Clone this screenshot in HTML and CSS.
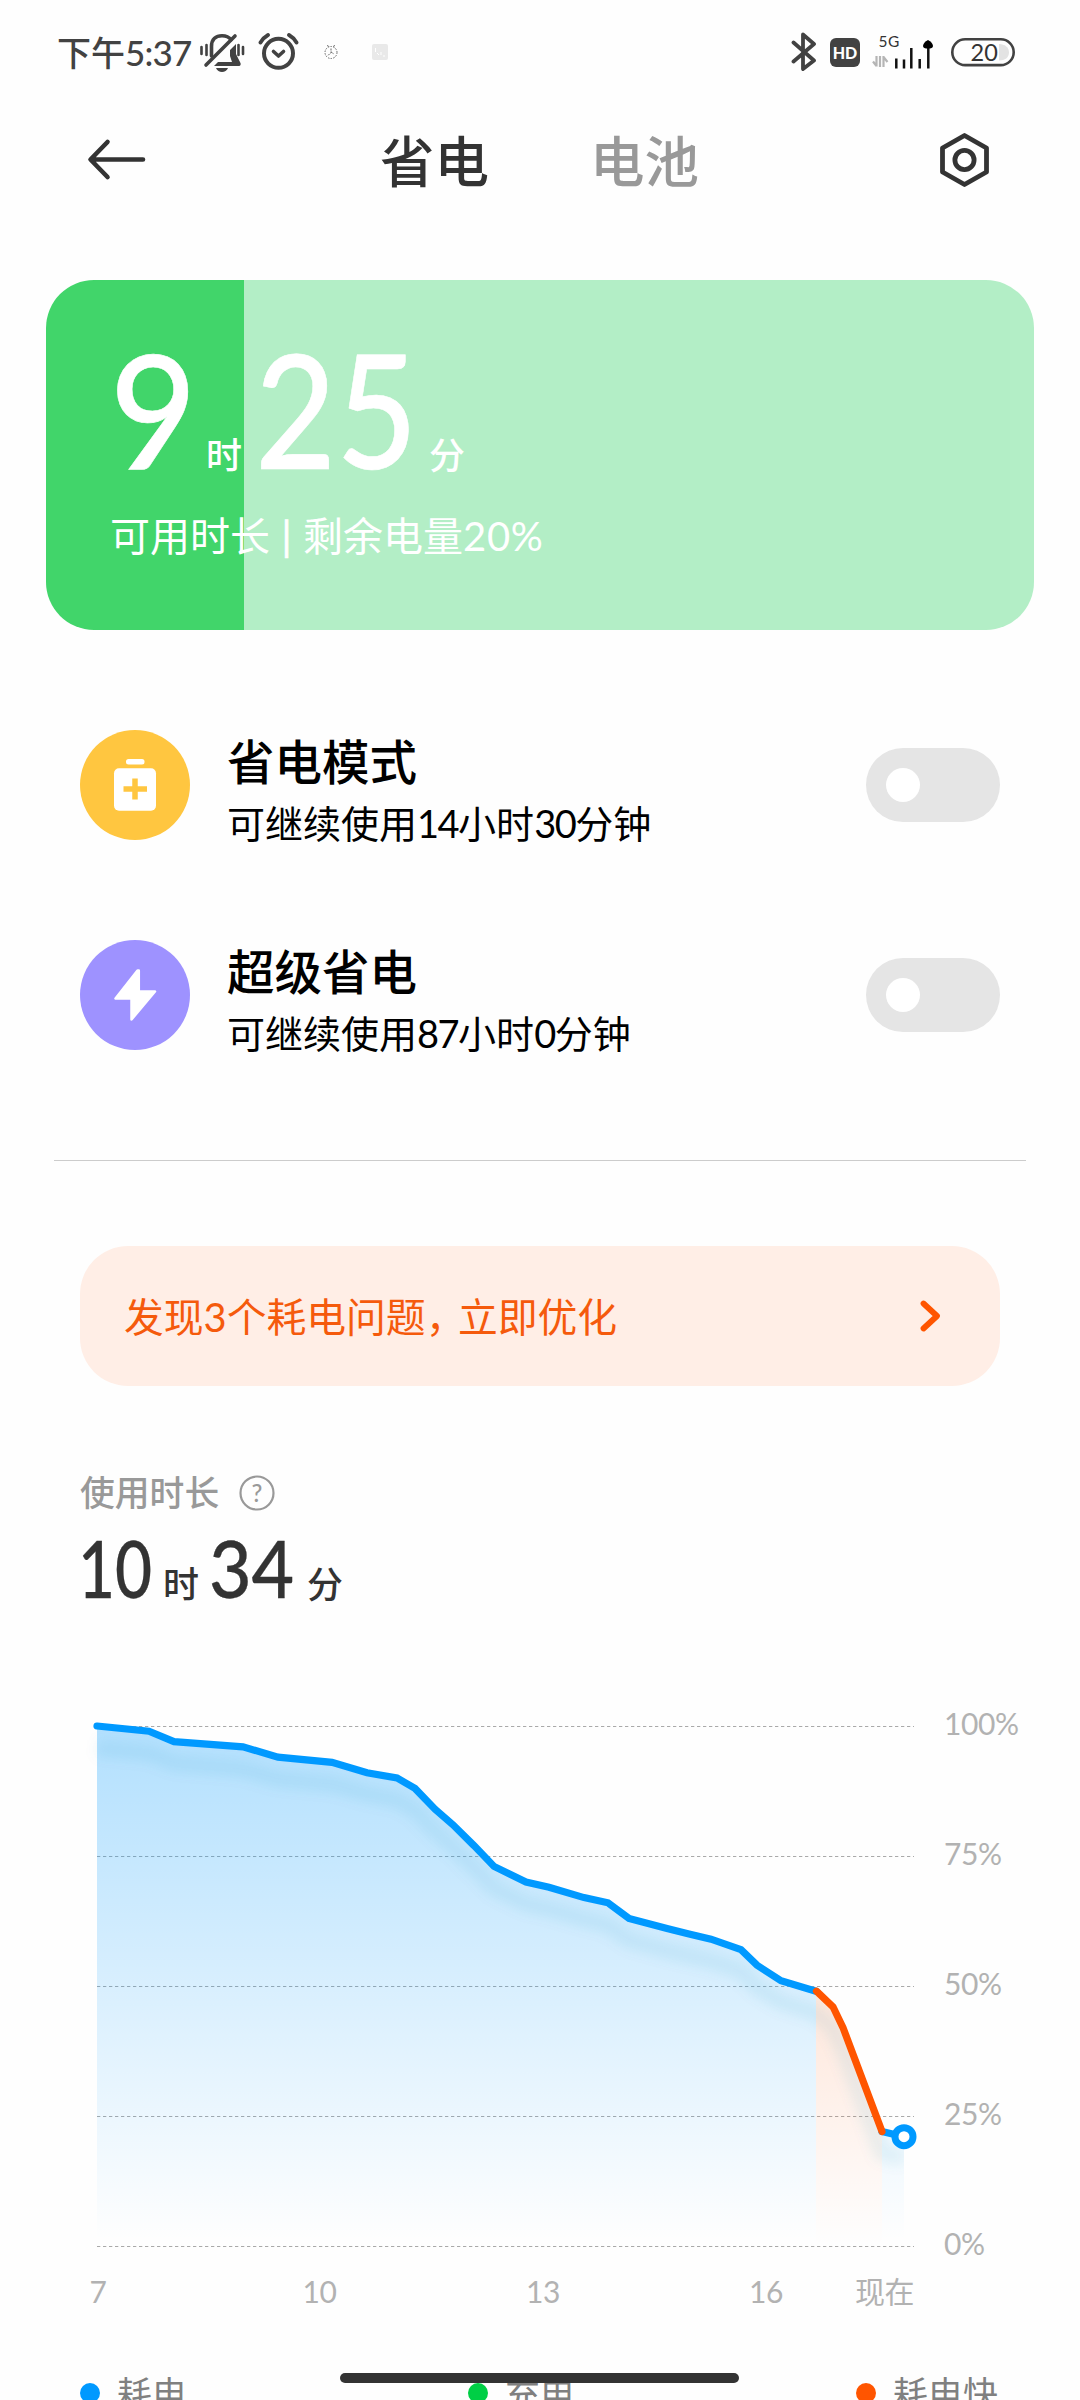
FILE: index.html
```html
<!DOCTYPE html>
<html lang="zh-CN">
<head>
<meta charset="utf-8">
<title>省电</title>
<link rel="stylesheet" href="styles.css">
</head>
<body>
<div class="screen">
  <div class="status">
    <span class="clock">下午<span class="clock-digits">5:37</span></span>
    <svg class="st-bell" width="46" height="40" viewBox="200 32 46 40" fill="none" stroke="#424242" stroke-width="3.6" stroke-linecap="round">
      <path d="M211.500 56V46.500C211.500 39 216 35.800 222 35.800c4 0 7 1.200 9 4"/>
      <path d="M206 65L235 36"/>
      <path d="M236 44v10l4.500 9c.5 1.300 0 3-1.500 3H214l4-4h14l-2-6v-6z" fill="#424242" stroke="none"/>
      <path d="M216 68h12c-1 2.600-3.500 4-6 4s-5-1.400-6-4z" fill="#424242" stroke="none"/>
      <path d="M201.500 47v7M206.500 45v10M238.500 45v10M243 47v7" stroke-width="2.600"/>
    </svg>
    <svg class="st-alarm" width="42" height="40" viewBox="258 32 42 40" fill="none" stroke="#424242" stroke-linecap="round">
      <circle cx="278.500" cy="53.300" r="14.500" stroke-width="4"/>
      <path d="M273.500 51.500l5 4.500 5-4.500" stroke-width="3.600" stroke-linejoin="round"/>
      <path d="M260.500 42.500q3-5 7.500-7.500M296.500 42.500q-3-5-7.500-7.500" stroke-width="3.800"/>
    </svg>
    <svg class="st-app" width="16" height="16" viewBox="0 0 16 16" fill="none" stroke="#666">
      <circle cx="8" cy="8.500" r="6" stroke-dasharray="1.500 1.200"/>
      <path d="M8 4.500v4l-3 3M8 8l3 2M4 1.500l2 1M12 1.500l-2 1" stroke-dasharray="2 1"/>
    </svg>
    <svg class="st-chip" width="16" height="16" viewBox="0 0 16 16">
      <rect width="16" height="16" rx="2" fill="#e9e9e9"/>
      <path d="M3.500 4v4M5 9l2 2M9 8v3M11 12h2" stroke="#fff" fill="none"/>
    </svg>
    <svg class="st-bt" width="26" height="40" viewBox="791 32 26 40" fill="none" stroke="#424242" stroke-width="3.800" stroke-linecap="round" stroke-linejoin="round">
      <path d="M793.500 42.500L814 60.500L803 69V34.500L814 44L793.500 61.500"/>
    </svg>
    <span class="hd">HD</span>
    <svg class="st-signal" width="62" height="40" viewBox="872 32 62 40">
      <text class="net" x="878.500" y="47">5G</text>
      <path d="M876.500 56v10.500M880 56v11M873 61.500l3.500 4.500M883.500 56v11M883.500 57l4 5" stroke="#b5b5b5" stroke-width="2.200" fill="none"/>
      <path d="M896.300 58.500v10M904 59.500v9M911.300 48v20.500M919.700 59v9.500M928.300 44v24.500" stroke="#111" stroke-width="2.500"/>
      <path d="M928 40c3 1.500 5 4 5 6s-2 2.500-5 2.500-5-.5-5-2.500 2-4.500 5-6z" fill="#000"/>
    </svg>
    <svg class="st-batt" width="66" height="30" viewBox="950 37 66 30">
      <path d="M999 44c6 0 10 3.500 10 8.500s-4 8-10 8z" fill="#e3e3e3"/>
      <rect x="952.300" y="39.300" width="61.400" height="25.800" rx="12.900" fill="none" stroke="#424242" stroke-width="2.600"/>
      <text class="batt-num" x="970.500" y="60.500">20</text>
    </svg>
  </div>

  <div class="header">
    <svg class="back" width="60" height="44" viewBox="86 139 60 44" fill="none" stroke="#333" stroke-width="4.600" stroke-linecap="round" stroke-linejoin="round">
      <path d="M107.500 143L90.500 160.500L107.500 178M91 160.500H143"/>
    </svg>
    <span class="tab tab-on">省电</span>
    <span class="tab">电池</span>
    <svg class="gear" width="52" height="56" viewBox="938 132 52 56" fill="none" stroke="#333" stroke-width="4.800" stroke-linejoin="round">
      <path d="M964.500 135.500L986.500 148V172L964.500 184.500L942.500 172V148Z"/>
      <circle cx="964.500" cy="160" r="9.600"/>
    </svg>
  </div>

  <div class="battery-card">
    <div class="big-time">
      <span class="num n9">9</span><span class="unit">时</span><span class="num n25">25</span><span class="unit">分</span>
    </div>
    <div class="remain">可用时长<span class="bar">|</span>剩余电量<span class="pct">20%</span></div>
  </div>

  <div class="modes">
    <div class="mode">
      <svg width="110" height="110" viewBox="0 0 110 110">
        <circle cx="55" cy="55" r="55" fill="#ffc640"/>
        <rect x="46" y="29" width="18.500" height="5.500" rx="2.500" fill="#fff"/>
        <rect x="34" y="38.300" width="42" height="42.500" rx="5" fill="#fff"/>
        <path d="M55 48.500v21M43.500 59h23.500" stroke="#ffc640" stroke-width="5.500"/>
      </svg>
      <div class="mode-text"><div class="mode-title">省电模式</div><div class="mode-sub">可继续使用<span class="d">14</span>小时<span class="d">30</span>分钟</div></div>
      <div class="toggle"><div class="knob"></div></div>
    </div>
    <div class="mode">
      <svg width="110" height="110" viewBox="0 0 110 110">
        <circle cx="55" cy="55" r="55" fill="#9e92ff"/>
        <path d="M57.500 30.500L35.500 58.500H51.500V79.500L75 51.500H58.800V30.500Z" fill="#fff" stroke="#fff" stroke-width="2.500" stroke-linejoin="round"/>
      </svg>
      <div class="mode-text"><div class="mode-title">超级省电</div><div class="mode-sub">可继续使用<span class="d">87</span>小时<span class="d">0</span>分钟</div></div>
      <div class="toggle"><div class="knob"></div></div>
    </div>
  </div>

  <div class="divider"></div>

  <div class="notice">
    <span>发现3个耗电问题<span class="comma">，</span>立即优化</span>
    <svg width="24" height="36" viewBox="918 1298 24 36" fill="none" stroke="#ff5500" stroke-width="5.800" stroke-linecap="round" stroke-linejoin="round"><path d="M923.500 1302.500L937 1315L923.500 1327.500"/></svg>
  </div>

  <div class="usage-label">使用时长
    <svg width="36" height="36" viewBox="0 0 36 36"><circle cx="18" cy="18" r="16.500" fill="none" stroke="#999" stroke-width="2.200"/><text class="q" x="18" y="26.500" text-anchor="middle">?</text></svg>
  </div>
  <div class="usage-time"><span class="num u10">10</span><span class="unit">时</span><span class="num u34">34</span><span class="unit">分</span></div>

  <svg class="chart" width="960" height="620" viewBox="80 1700 960 620">
    <defs>
      <linearGradient id="blue" gradientUnits="userSpaceOnUse" x1="0" y1="1726" x2="0" y2="2240"><stop offset="0" stop-color="#0099ff" stop-opacity=".3"/><stop offset="1" stop-color="#0099ff" stop-opacity="0"/></linearGradient>
      <linearGradient id="orange" gradientUnits="userSpaceOnUse" x1="0" y1="1991" x2="0" y2="2246"><stop offset="0" stop-color="#ff5500" stop-opacity=".14"/><stop offset="1" stop-color="#ff5500" stop-opacity="0"/></linearGradient>
      <filter id="soft" filterUnits="userSpaceOnUse" x="60" y="1680" width="900" height="540"><feGaussianBlur stdDeviation="6"/></filter>
      <clipPath id="under"><path d="M80 1726H97L149 1731.200 174 1741.600 243 1746.800 278 1757.200 332 1762.400 367 1772.800 397 1778 415 1788.400 435 1809.200 453 1824.800 474 1845.600 494 1866.400 526 1882 549 1887.200 584 1897.600 608 1902.800 629 1918.400 668 1928.800 689 1934 711 1939.200 741 1949.600 757 1965.200 781 1980.800 816 1991.200 833 2006.800 843 2027.600 882 2131.600 904 2136.800V2246H80Z"/></clipPath>
    </defs>
    <path class="grid" d="M97 1726.500H914M97 1856.500H914M97 1986.500H914M97 2116.500H914M97 2246.500H914"/>
    <path fill="url(#blue)" d="M97 1726L149 1731.200 174 1741.600 243 1746.800 278 1757.200 332 1762.400 367 1772.800 397 1778 415 1788.400 435 1809.200 453 1824.800 474 1845.600 494 1866.400 526 1882 549 1887.200 584 1897.600 608 1902.800 629 1918.400 668 1928.800 689 1934 711 1939.200 741 1949.600 757 1965.200 781 1980.800 816 1991.200V2246H97Z"/>
    <path fill="url(#orange)" d="M816 1991.200L833 2006.800 843 2027.600 882 2131.600V2246H816Z"/>
    <path fill="url(#blue)" d="M882 2131.600L904 2136.800V2246H882Z"/>
    <g clip-path="url(#under)">
      <path class="glow" filter="url(#soft)" d="M97 1748L149 1753 174 1763 243 1769 278 1779 332 1784 367 1794 397 1800 415 1810 435 1831 453 1847 474 1867 494 1888 526 1904 549 1909 584 1919 608 1925 629 1940 668 1951 711 1961 741 1971 757 1987 781 2002 816 2013 833 2028 843 2049 882 2153 904 2158"/>
    </g>
    <path class="line" stroke="#0099ff" d="M882 2131.600L904 2136.800"/>
    <path class="line" stroke="#0099ff" d="M97 1726L149 1731.200 174 1741.600 243 1746.800 278 1757.200 332 1762.400 367 1772.800 397 1778 415 1788.400 435 1809.200 453 1824.800 474 1845.600 494 1866.400 526 1882 549 1887.200 584 1897.600 608 1902.800 629 1918.400 668 1928.800 689 1934 711 1939.200 741 1949.600 757 1965.200 781 1980.800 816 1991.200"/>
    <path class="line" stroke="#ff5500" d="M816.500 1991.200L833 2006.800 843 2027.600 882 2131.600"/>
    <circle cx="904" cy="2136.700" r="9" fill="#fff" stroke="#0099ff" stroke-width="7"/>
    <g class="axis">
      <text x="944" y="1735">100%</text><text x="944" y="1865">75%</text><text x="944" y="1995">50%</text><text x="944" y="2125">25%</text><text x="944" y="2255">0%</text>
      <g text-anchor="middle"><text x="98" y="2303">7</text><text x="319.500" y="2303">10</text><text x="543" y="2303">13</text><text x="766" y="2303">16</text><text x="884.500" y="2303">现在</text></g>
    </g>
  </svg>

  <div class="legend">
    <span><i class="dot blue"></i>耗电</span>
    <span><i class="dot green"></i>充电</span>
    <span><i class="dot orange"></i>耗电快</span>
  </div>
  <div class="home-bar"></div>
</div>
</body>
</html>
```
FILE: styles.css
```css
* { box-sizing: border-box; }
body { margin: 0; background: #fefefe; }
.screen {
  position: relative; width: 1080px; height: 2400px; overflow: hidden;
  background: #fefefe; color: #333;
  font-family: Lato, "Noto Sans CJK SC", sans-serif;
  display: flex; flex-direction: column;
}
.screen > * { flex: none; }
svg { display: block; flex: none; }

.status { height: 104px; padding-left: 57px; display: flex; align-items: center; white-space: nowrap; }
.clock { width: 143px; font-size: 34px; line-height: 104px; color: #424242; font-weight: 500; }
.clock-digits { font-size: 35px; letter-spacing: -0.8px; }
.st-alarm { margin-left: 12px; }
.st-app { margin-left: 23px; }
.st-chip { margin-left: 33px; }
.st-bt { margin-left: 403px; }
.hd {
  margin-left: 13px; width: 30px; height: 29px; border-radius: 6px; background: #424242;
  color: #fff; font-size: 16px; font-weight: 900; line-height: 29px; text-align: center;
}
.st-signal { margin-left: 12px; }
.st-batt { margin-left: 16px; }
.net { font-size: 15.5px; fill: #333; letter-spacing: 0.5px; }
.batt-num { font-size: 23.5px; fill: #333; }

.header { height: 112px; padding-left: 86px; display: flex; align-items: center; }
.tab { width: 110px; margin-left: 100px; padding-top: 2px; font-size: 54.5px; line-height: 112px; font-weight: 500; color: #999; white-space: nowrap; }
.tab-on { margin-left: 234px; color: #333; }
.gear { margin-left: 238px; }

.battery-card {
  margin: 64px 46px 0; height: 350px; padding: 48px 0 0 64px; border-radius: 48px; color: #fff;
  background: linear-gradient(90deg, #41d56a 20%, #b3eec6 20%);
}
.big-time { height: 160px; display: flex; align-items: baseline; font-weight: 500; }
.num { display: block; transform-origin: left; white-space: nowrap; }
.big-time .num { font-size: 159px; line-height: 160px; -webkit-text-stroke: 0.6px #fff; }
.unit { font-size: 36px; line-height: 50px; font-weight: 500; }
.big-time .n9 { width: 96px; transform: scaleX(.94); }
.big-time .n25 { width: 174px; margin-left: 13px; transform: scaleX(.88); }
.remain { margin-top: 18px; font-size: 40px; line-height: 60px; white-space: nowrap; display: flex; }
.bar { width: 33px; text-align: center; -webkit-text-stroke: 0.6px #fff; }
.pct { letter-spacing: 0.7px; }

.modes { margin-top: 100px; padding: 0 80px; display: grid; gap: 100px; color: #000; }
.mode { height: 110px; display: flex; align-items: center; }
.mode-text { flex: 1; margin-left: 37px; height: 110px; padding-top: 4px; white-space: nowrap; }
.mode-title { font-size: 47.5px; line-height: 56px; font-weight: 500; }
.mode-sub { margin-top: 8px; font-size: 38px; line-height: 50px; }
.d { letter-spacing: -1.5px; }
.toggle { width: 134px; height: 74px; border-radius: 37px; background: #e5e5e5; padding: 20px; }
.knob { width: 34px; height: 34px; border-radius: 50%; background: #fff; }

.divider { margin: 110px 54px 0; height: 1px; background: #ccc; }

.notice {
  margin: 85px 80px 0; height: 140px; border-radius: 48px; background: #ffeee6; color: #f55a0c;
  padding: 1px 58px 0 44px; display: flex; align-items: center; justify-content: space-between;
  font-size: 39.8px; line-height: 138px;
}
.comma { letter-spacing: -7.5px; }

.usage-label { margin: 82px 0 0 80px; height: 50px; display: flex; align-items: center; gap: 20px; font-size: 34.8px; line-height: 50px; color: #999; font-weight: 500; }
.q { font-size: 24px; font-weight: 500; fill: #999; }
.usage-time { margin: 10px 0 0 78px; height: 80px; display: flex; align-items: baseline; font-weight: 500; }
.usage-time .num { font-size: 79px; line-height: 80px; -webkit-text-stroke: 0.3px #333; }
.usage-time .u10 { width: 85px; transform: scaleX(.81); }
.usage-time .u34 { width: 98px; margin-left: 10px; transform: scaleX(.93); }

.chart { margin: 92px 0 0 80px; }
.grid { stroke: #aaa; stroke-width: 1; stroke-dasharray: 3.3 2.7; }
.line { fill: none; stroke-width: 7.2; stroke-linecap: round; stroke-linejoin: miter; }
.glow { fill: none; stroke: #0088b8; stroke-opacity: .08; stroke-width: 17; }
.axis { font-size: 30px; fill: #b2b2b2; letter-spacing: -0.4px; }

.legend { margin: 43px 0 0 80px; display: grid; grid-template-columns: repeat(2, 388px) 200px; font-size: 35px; line-height: 60px; color: #808080; }
.legend span { display: flex; align-items: center; gap: 17px; white-space: nowrap; }
.dot { width: 20px; height: 20px; border-radius: 50%; }
.blue { background: #0099ff; }
.green { background: #00cf45; }
.orange { background: #ff5500; }
.home-bar { position: absolute; left: 340px; top: 2373px; width: 399px; height: 10px; border-radius: 5px; background: #333; }
```
